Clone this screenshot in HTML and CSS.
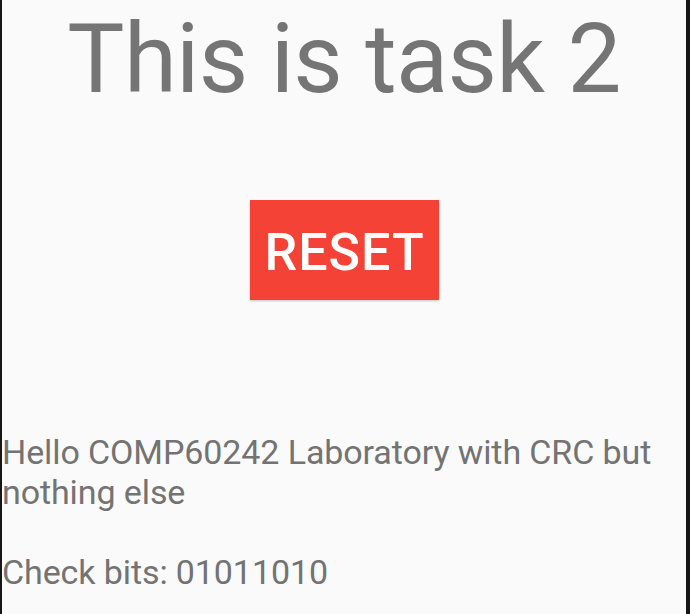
FILE: index.html
```html
<!DOCTYPE html>
<html>
<head>
<meta charset="utf-8">
<link rel="stylesheet" href="styles.css">
</head>
<body>
<div class="screen">
  <h1 class="title">This is task 2</h1>
  <button class="reset">RESET</button>
  <div class="output">
    <p class="msg">Hello COMP60242 Laboratory with CRC but nothing else</p>
    <p class="bits">Check bits: 01011010</p>
  </div>
</div>
</body>
</html>
```
FILE: styles.css
```css
html, body {
  margin: 0;
  padding: 0;
  background: #161616;
}
.screen {
  box-sizing: border-box;
  width: 690px;
  height: 614px;
  border-left: 2px solid #161616;
  border-right: 4px solid #161616;
  background: #fafafa;
  display: flex;
  flex-direction: column;
  align-items: center;
  font-family: Roboto, "Noto Sans", sans-serif;
  overflow: hidden;
}
.title {
  margin: 3px 0 0 0;
  font-size: 96px;
  font-weight: 400;
  line-height: normal;
  letter-spacing: -0.7px;
  color: #757575;
}
.reset {
  margin-top: 85px;
  width: 189px;
  height: 100px;
  border: none;
  padding: 4px 0 0 1px;
  background: #f44336;
  color: #ffffff;
  font-family: Roboto, sans-serif;
  font-weight: 500;
  font-size: 52px;
  letter-spacing: 1px;
  box-shadow: 0 1px 2px rgba(0, 0, 0, 0.22);
}
.output {
  align-self: stretch;
  margin-top: 132px;
  font-size: 34px;
  line-height: normal;
  letter-spacing: -0.1px;
  color: #737373;
}
.output p {
  margin: 0;
}
.bits {
  margin-top: 39.7px !important;
}
```
